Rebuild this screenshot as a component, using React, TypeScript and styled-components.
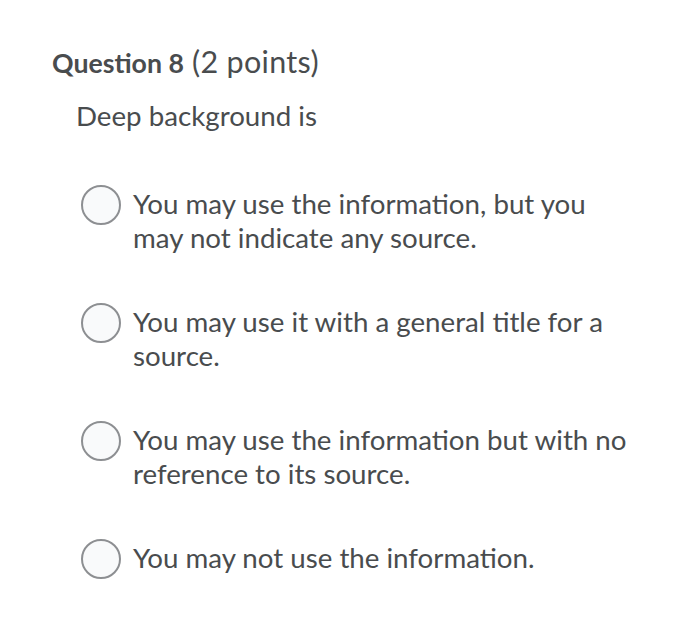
import React from "react";
import styled, { createGlobalStyle } from "styled-components";

const GlobalStyle = createGlobalStyle`
  html, body {
    margin: 0;
    padding: 0;
    background: #ffffff;
  }
  body {
    font-family: Lato, "Open Sans", sans-serif;
    color: #494c4e;
  }
`;

const options = [
  "You may use the information, but you may not indicate any source.",
  "You may use it with a general title for a source.",
  "You may use the information but with no reference to its source.",
  "You may not use the information.",
];

export default function App() {
  return (
    <>
      <GlobalStyle />
      <Page>
        <Heading>
          <strong>Question 8</strong> (2 points)
        </Heading>
        <Prompt>Deep background is</Prompt>
        <OptionList>
          {options.map((text) => (
            <Option key={text}>
              <Radio />
              <OptionText>{text}</OptionText>
            </Option>
          ))}
        </OptionList>
      </Page>
    </>
  );
}

const Page = styled.div`
  width: 700px;
  height: 628px;
  padding: 42px 0 0 52px;
  box-sizing: border-box;
`;

const Heading = styled.h2`
  margin: 0;
  font-size: 30.5px;
  line-height: 38px;
  font-weight: 400;
  letter-spacing: 0.3px;

  strong {
    font-size: 26.7px;
    font-weight: 700;
    letter-spacing: 0;
  }
`;

const Prompt = styled.p`
  margin: 17px 0 0 24px;
  font-size: 27.7px;
  line-height: 34px;
`;

const OptionList = styled.div`
  display: flex;
  flex-direction: column;
  gap: 50px;
  margin: 54px 0 0 29px;
`;

const Option = styled.label`
  display: flex;
  align-items: flex-start;
  gap: 12px;
`;

const Radio = styled.span`
  flex: none;
  width: 36px;
  height: 36px;
  margin-top: -2px;
  border: 2px solid #8d8f92;
  border-radius: 50%;
  background: #f9fafb;
`;

const OptionText = styled.span`
  width: 500px;
  font-size: 27.7px;
  line-height: 34px;
`;
